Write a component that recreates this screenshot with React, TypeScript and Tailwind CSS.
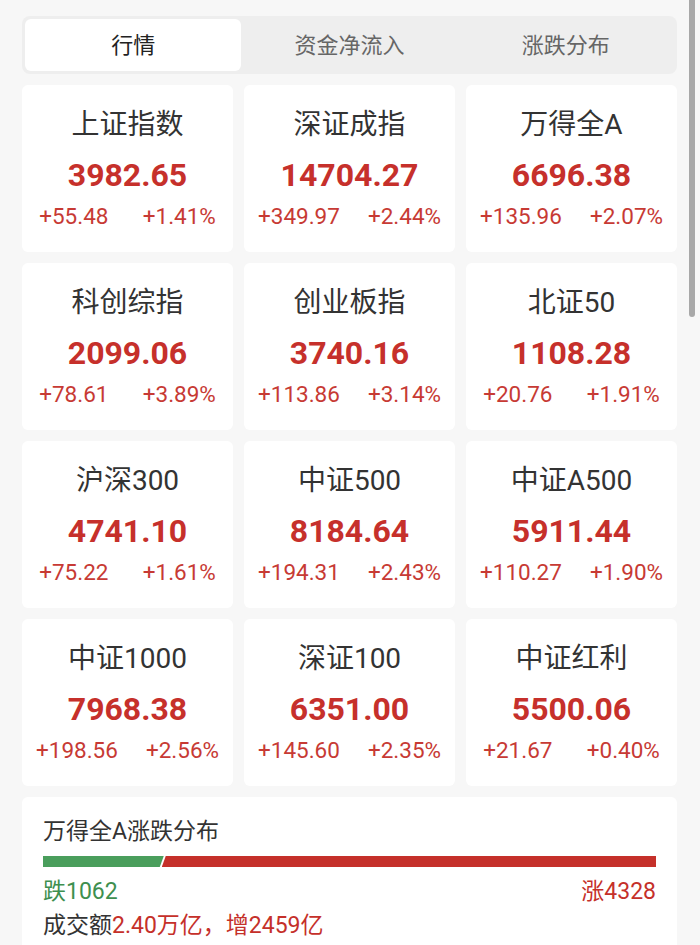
import React from "react";

type Item = { name: string; value: string; chg: string; pct: string };

const items: Item[] = [
  { name: "上证指数", value: "3982.65", chg: "+55.48", pct: "+1.41%" },
  { name: "深证成指", value: "14704.27", chg: "+349.97", pct: "+2.44%" },
  { name: "万得全A", value: "6696.38", chg: "+135.96", pct: "+2.07%" },
  { name: "科创综指", value: "2099.06", chg: "+78.61", pct: "+3.89%" },
  { name: "创业板指", value: "3740.16", chg: "+113.86", pct: "+3.14%" },
  { name: "北证50", value: "1108.28", chg: "+20.76", pct: "+1.91%" },
  { name: "沪深300", value: "4741.10", chg: "+75.22", pct: "+1.61%" },
  { name: "中证500", value: "8184.64", chg: "+194.31", pct: "+2.43%" },
  { name: "中证A500", value: "5911.44", chg: "+110.27", pct: "+1.90%" },
  { name: "中证1000", value: "7968.38", chg: "+198.56", pct: "+2.56%" },
  { name: "深证100", value: "6351.00", chg: "+145.60", pct: "+2.35%" },
  { name: "中证红利", value: "5500.06", chg: "+21.67", pct: "+0.40%" },
];

const font = {
  fontFamily: 'Roboto, "Noto Sans CJK SC", sans-serif',
};

export default function App() {
  const down = 1062;
  const up = 4328;
  const downPct = (down / (down + up)) * 100;
  return (
    <div
      className="relative min-h-screen bg-[#f7f7f7] pl-[22px] pr-[23px] pt-[16px] font-['Roboto','Noto_Sans_CJK_SC',sans-serif]"
      style={font}
    >
      <div className="flex h-[58px] rounded-[8px] bg-[#eeeeee] p-[3px]">
        <div className="flex flex-1 items-center justify-center rounded-[6px] bg-white text-[22px] text-[#222222]">
          行情
        </div>
        <div className="flex flex-1 items-center justify-center text-[22px] text-[#666666]">
          资金净流入
        </div>
        <div className="flex flex-1 items-center justify-center text-[22px] text-[#666666]">
          涨跌分布
        </div>
      </div>

      <div className="mt-[11px] grid grid-cols-3 gap-[11px]">
        {items.map((it) => (
          <div
            key={it.name}
            className="flex h-[167px] flex-col items-center rounded-[6px] bg-white pt-[22px]"
          >
            <div className="text-[28px] leading-[36px] text-[#333333]">{it.name}</div>
            <div className="mt-[12px] text-[32px] font-bold leading-[40px] text-[#c6302b]">
              {it.value}
            </div>
            <div className="mt-[6px] flex w-full justify-around text-[22.5px] leading-[30px] text-[#c73a34]">
              <span>{it.chg}</span>
              <span>{it.pct}</span>
            </div>
          </div>
        ))}
      </div>

      <div className="mt-[11px] h-[160px] rounded-[6px] bg-white px-[21px] pt-[20px]">
        <div className="text-[23px] leading-[30px] text-[#333333]">万得全A涨跌分布</div>
        <div className="mt-[9px] flex h-[11px] w-full">
          <div
            className="h-full bg-[#4a9e5c] [clip-path:polygon(0_0,100%_0,calc(100%-4px)_100%,0_100%)]"
            style={{ width: `${downPct}%` }}
          />
          <div className="-ml-[2px] h-full flex-1 bg-[#c5302a] [clip-path:polygon(4px_0,100%_0,100%_100%,0_100%)]" />
        </div>
        <div className="mt-[10px] flex justify-between text-[23px] leading-[30px]">
          <span className="text-[#3e8f4f]">跌{down}</span>
          <span className="text-[#c5302a]">涨{up}</span>
        </div>
        <div className="mt-[4px] text-[23px] leading-[30px] text-[#333333]">
          成交额<span className="text-[#c5302a]">2.40万亿，增2459亿</span>
        </div>
      </div>

      <div className="absolute right-[5px] top-0 h-[317px] w-[6px] rounded-b-[3px] bg-[#a8a8a8]" />
    </div>
  );
}
